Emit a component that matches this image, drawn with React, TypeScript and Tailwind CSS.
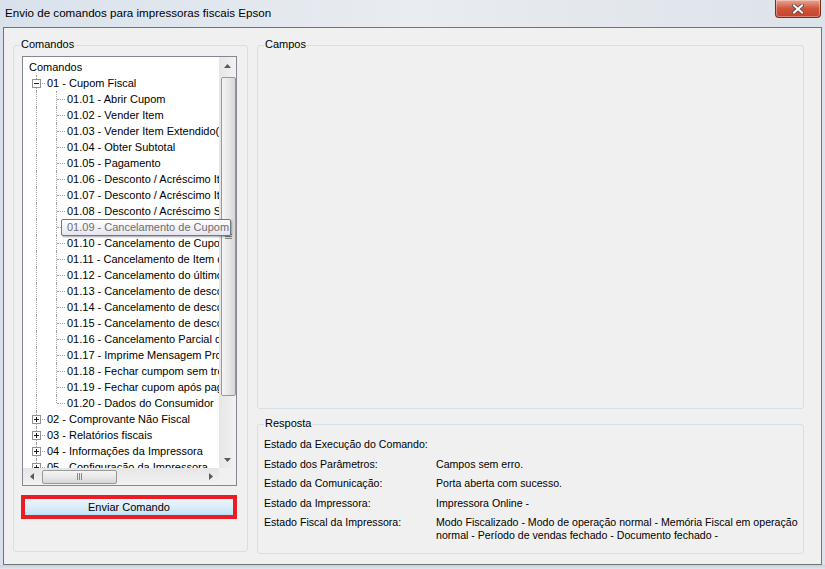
import React from "react";

const children = [
  "01.01 - Abrir Cupom",
  "01.02 - Vender Item",
  "01.03 - Vender Item Extendido(Avançado)",
  "01.04 - Obter Subtotal",
  "01.05 - Pagamento",
  "01.06 - Desconto / Acréscimo Item",
  "01.07 - Desconto / Acréscimo Item",
  "01.08 - Desconto / Acréscimo Subtotal",
  "01.09 - Cancelamento de Cupom",
  "01.10 - Cancelamento de Cupom Fiscal",
  "01.11 - Cancelamento de Item de Cupom",
  "01.12 - Cancelamento do último item",
  "01.13 - Cancelamento de desconto",
  "01.14 - Cancelamento de desconto",
  "01.15 - Cancelamento de desconto",
  "01.16 - Cancelamento Parcial de Item",
  "01.17 - Imprime Mensagem Promocional",
  "01.18 - Fechar cumpom sem troco",
  "01.19 - Fechar cupom após pagamento",
  "01.20 - Dados do Consumidor",
];

const collapsed = [
  "02 - Comprovante Não Fiscal",
  "03 - Relatórios fiscais",
  "04 - Informações da Impressora",
  "05 - Configuração da Impressora",
];

function VLine({ half }: { half?: boolean }) {
  return (
    <div
      className={
        "absolute left-[9px] top-0 border-l border-dotted border-[#a0a0a0] " +
        (half ? "h-[8px]" : "bottom-0")
      }
    />
  );
}

function HLine({ left }: { left: number }) {
  return (
    <div
      className="absolute top-[8px] right-0 border-t border-dotted border-[#a0a0a0]"
      style={{ left }}
    />
  );
}

function Box({ plus }: { plus?: boolean }) {
  return (
    <div className="absolute left-[5px] top-[4px] w-[9px] h-[9px] border border-[#919191] bg-white flex items-center justify-center">
      <div className="relative w-[5px] h-[5px]">
        <div className="absolute left-0 right-0 top-[2px] h-[1px] bg-[#1f1f1f]" />
        {plus && <div className="absolute top-0 bottom-0 left-[2px] w-[1px] bg-[#1f1f1f]" />}
      </div>
    </div>
  );
}

function Level1({ label, plus }: { label: string; plus?: boolean }) {
  return (
    <div className="h-4 flex items-center whitespace-nowrap">
      <div className="relative w-[18px] h-4 ml-[4px] shrink-0">
        <VLine />
        <HLine left={10} />
        <Box plus={plus} />
      </div>
      <span className="ml-[2px]">{label}</span>
    </div>
  );
}

function Level2({ label, last }: { label: string; last?: boolean }) {
  return (
    <div className="h-4 flex items-center whitespace-nowrap">
      <div className="relative w-[18px] h-4 ml-[4px] shrink-0">
        <VLine />
      </div>
      <div className="relative w-[18px] h-4 ml-[2px] shrink-0">
        <VLine half={last} />
        <HLine left={10} />
      </div>
      <span className="ml-[2px]">{label}</span>
    </div>
  );
}

function Tri({ dir }: { dir: "up" | "down" | "left" | "right" }) {
  const pts =
    dir === "up"
      ? "0,4 7,4 3.5,0"
      : dir === "down"
      ? "0,0 7,0 3.5,4"
      : dir === "left"
      ? "4,0 4,7 0,3.5"
      : "0,0 0,7 4,3.5";
  const w = dir === "up" || dir === "down" ? 7 : 4;
  const h = dir === "up" || dir === "down" ? 4 : 7;
  return (
    <svg width={w} height={h} viewBox={`0 0 ${w} ${h}`}>
      <polygon points={pts} fill="#5a5a5a" />
    </svg>
  );
}

function GroupBox({
  title,
  className,
  children,
}: {
  title: string;
  className?: string;
  children?: React.ReactNode;
}) {
  return (
    <div className={"relative border border-[#d5dfe5] rounded-[3px] shrink-0 " + (className || "")}>
      <span className="absolute left-[6px] top-[-8px] px-[1px] bg-[#f0f0f0] leading-[13px] text-[11px]">
        {title}
      </span>
      {children}
    </div>
  );
}

export default function App() {
  return (
    <div className="w-[825px] h-[569px] overflow-hidden flex flex-col bg-gradient-to-r from-[#d9e2ec] via-[#e9ecf0] to-[#dde3ea] text-black text-[11px] font-['Liberation_Sans',Arial,sans-serif]">
      {/* Title bar */}
      <div className="relative h-[27px] shrink-0">
        <div className="pl-[5px] pt-[5px] text-[11.6px] leading-[15px]">
          Envio de comandos para impressoras fiscais Epson
        </div>
        <div className="absolute right-[4px] top-0 w-[46px] h-[18px] rounded-b-[4px] border border-t-0 border-[#7b2a1c] bg-gradient-to-b from-[#e8a493] via-[#d0553c] to-[#c4432a] flex items-center justify-center shadow-[inset_0_0_0_1px_rgba(255,255,255,0.35)]">
          <svg width="12" height="10" viewBox="0 0 12 10">
            <path
              d="M2 1.5 L10 8.5 M10 1.5 L2 8.5"
              stroke="#4a4a4a"
              strokeWidth="3.6"
              strokeLinecap="square"
            />
            <path
              d="M2 1.5 L10 8.5 M10 1.5 L2 8.5"
              stroke="#ffffff"
              strokeWidth="2"
              strokeLinecap="square"
            />
          </svg>
        </div>
      </div>

      {/* Client area */}
      <div className="mx-[3px] h-[538px] shrink-0 border border-[#6f737a] bg-[#f0f0f0] flex pl-[9px] pt-[17px] pr-[15px] pb-[11px] gap-[9px]">
        {/* Comandos */}
        <GroupBox title="Comandos" className="w-[235px] h-[507px] pt-[10px] pl-[8px]">
          <div className="relative w-[215px] h-[430px] border border-[#828790] bg-white flex flex-col">
            <div className="flex flex-1 min-h-0">
              <div className="flex-1 overflow-hidden pt-[2px] leading-[13px]">
                <div className="h-4 flex items-center pl-[6px] relative">
                  Comandos
                </div>
                <Level1 label="01 - Cupom Fiscal" />
                {children.map((c, i) => (
                  <Level2 key={c} label={c} last={i === children.length - 1} />
                ))}
                {collapsed.map((c) => (
                  <Level1 key={c} label={c} plus />
                ))}
              </div>
              {/* vertical scrollbar */}
              <div className="w-[17px] bg-gradient-to-r from-[#e6e6e6] to-[#f2f2f2] flex flex-col items-center">
                <div className="h-[17px] w-full flex items-center justify-center">
                  <Tri dir="up" />
                </div>
                <div className="mt-[3px] w-[15px] h-[319px] ml-[1px] rounded-[2px] border border-[#989898] bg-gradient-to-r from-[#f5f5f5] via-[#e8e8e8] to-[#d6d6d6] flex flex-col items-center justify-center gap-[1px]">
                  <div className="w-[7px] h-[1px] bg-[#888]" />
                  <div className="w-[7px] h-[1px] bg-[#888]" />
                  <div className="w-[7px] h-[1px] bg-[#888]" />
                </div>
                <div className="flex-1" />
                <div className="h-[17px] w-full flex items-center justify-center">
                  <Tri dir="down" />
                </div>
              </div>
            </div>
            {/* horizontal scrollbar */}
            <div className="h-[17px] flex shrink-0">
              <div className="flex-1 flex items-center bg-gradient-to-b from-[#e6e6e6] to-[#f2f2f2]">
                <div className="w-[17px] h-full flex items-center justify-center">
                  <Tri dir="left" />
                </div>
                <div className="ml-[2px] w-[75px] h-[14px] rounded-[2px] border border-[#989898] bg-gradient-to-b from-[#f5f5f5] via-[#e8e8e8] to-[#d6d6d6] flex items-center justify-center gap-[1px]">
                  <div className="w-[1px] h-[7px] bg-[#888]" />
                  <div className="w-[1px] h-[7px] bg-[#888]" />
                  <div className="w-[1px] h-[7px] bg-[#888]" />
                </div>
                <div className="flex-1" />
                <div className="w-[17px] h-full flex items-center justify-center">
                  <Tri dir="right" />
                </div>
              </div>
              <div className="w-[17px] bg-[#f0f0f0]" />
            </div>

            {/* tooltip over 01.09 */}
            <div className="absolute left-[38px] top-[162px] w-[170px] h-[17px] rounded-[2px] border border-[#767676] bg-gradient-to-b from-white to-[#e4e5f0] text-[#6d6d6d] pl-[5px] flex items-center whitespace-nowrap shadow-[1px_1px_2px_rgba(0,0,0,0.35)]">
              01.09 - Cancelamento de Cupom
            </div>
          </div>

          <div className="mt-[9px] ml-[-1px] w-[216px] h-[24px] border-[4px] border-[#ec1c24] bg-gradient-to-b from-[#eaf5fd] via-[#dcedf9] to-[#bfe2f6] flex items-center justify-center">
            Enviar Comando
          </div>
        </GroupBox>

        {/* Right column */}
        <div className="w-[547px] flex flex-col gap-[15px]">
          <GroupBox title="Campos" className="h-[364px]" />
          <GroupBox title="Resposta" className="h-[130px] pl-[6px] pt-[13px]">
            <div className="grid grid-cols-[172px_1fr] gap-y-[6.5px] leading-[13px] whitespace-nowrap text-[10.6px]">
              <span>Estado da Execução do Comando:</span>
              <span></span>
              <span>Estado dos Parâmetros:</span>
              <span>Campos sem erro.</span>
              <span>Estado da Comunicação:</span>
              <span>Porta aberta com sucesso.</span>
              <span>Estado da Impressora:</span>
              <span>Impressora Online -</span>
              <span>Estado Fiscal da Impressora:</span>
              <span>
                Modo Fiscalizado - Modo de operação normal - Memória Fiscal em operação
                <br />
                normal - Período de vendas fechado - Documento fechado -
              </span>
            </div>
          </GroupBox>
        </div>
      </div>
      <div className="flex-1 bg-gradient-to-b from-[#c9d0d8] to-[#dfe5ec]" />
    </div>
  );
}
